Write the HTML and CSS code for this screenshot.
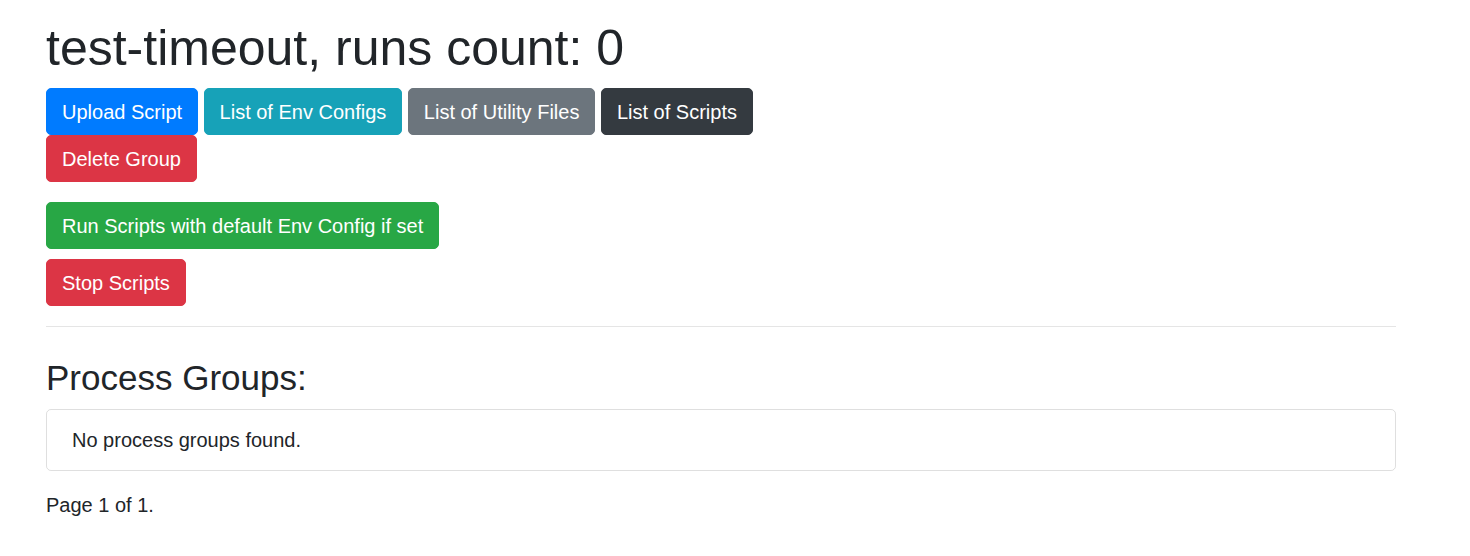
FILE: index.html
```html
<!DOCTYPE html>
<html lang="en">
<head>
<meta charset="utf-8">
<title>test-timeout</title>
<link rel="stylesheet" href="styles.css">
</head>
<body>
<div class="page">
  <h1 class="title">test-timeout, runs count: 0</h1>
  <div class="btn-row">
    <a class="btn btn-primary">Upload Script</a>
    <a class="btn btn-info">List of Env Configs</a>
    <a class="btn btn-secondary">List of Utility Files</a>
    <a class="btn btn-dark">List of Scripts</a>
  </div>
  <div class="btn-row">
    <a class="btn btn-danger">Delete Group</a>
  </div>
  <div class="actions">
    <div class="btn-row"><a class="btn btn-success">Run Scripts with default Env Config if set</a></div>
    <div class="btn-row"><a class="btn btn-danger">Stop Scripts</a></div>
  </div>
  <hr class="divider">
  <h3 class="section-title">Process Groups:</h3>
  <ul class="list-group">
    <li class="list-group-item">No process groups found.</li>
  </ul>
  <p class="pager">Page 1 of 1.</p>
</div>
</body>
</html>
```
FILE: styles.css
```css
html { font-size: 20px; }
* { box-sizing: border-box; }
body {
  margin: 0;
  font-family: "Liberation Sans", Arial, sans-serif;
  font-size: 1rem;
  line-height: 1.5;
  color: #212529;
  background: #fff;
}
.page {
  padding: 0 74px 0 46px;
}
.title {
  font-size: 50px;
  font-weight: 500;
  line-height: 1.2;
  margin: 18px 0 10px;
}
.btn-row {
  display: flex;
  flex-wrap: wrap;
  column-gap: 5.5px;
}
.btn {
  display: inline-block;
  font-size: 1rem;
  line-height: 1.5;
  padding: 7.5px 15px;
  border: 1px solid transparent;
  border-radius: 5px;
  color: #fff;
  text-decoration: none;
  cursor: pointer;
  white-space: nowrap;
}
.btn-primary { background: #007bff; border-color: #007bff; }
.btn-info { background: #17a2b8; border-color: #17a2b8; }
.btn-secondary { background: #6c757d; border-color: #6c757d; }
.btn-dark { background: #343a40; border-color: #343a40; }
.btn-danger { background: #dc3545; border-color: #dc3545; }
.btn-success { background: #28a745; border-color: #28a745; }
.actions {
  margin-top: 20px;
  display: flex;
  flex-direction: column;
  row-gap: 10px;
}
.divider {
  margin: 20px 0;
  border: 0;
  border-top: 1px solid rgba(0, 0, 0, 0.1);
}
.section-title {
  font-size: 35px;
  font-weight: 500;
  line-height: 1.2;
  margin: 30px 0 10px;
}
.list-group {
  list-style: none;
  margin: 0;
  padding: 0;
}
.list-group-item {
  padding: 15px 25px;
  border: 1px solid rgba(0, 0, 0, 0.125);
  border-radius: 5px;
}
.pager {
  margin: 19px 0 20px;
}
```
